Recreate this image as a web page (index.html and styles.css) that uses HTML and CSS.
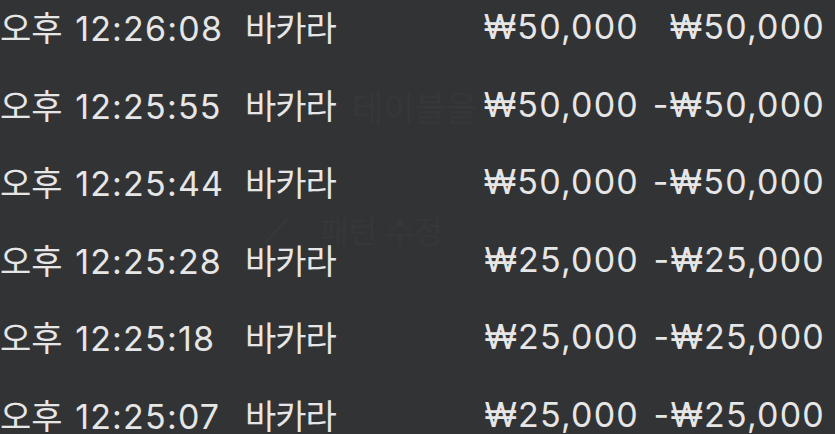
FILE: index.html
```html
<!DOCTYPE html>
<html lang="ko">
<head>
<meta charset="utf-8">
<link rel="stylesheet" href="styles.css">
</head>
<body>
<div class="screen">
  <div class="ghost">
    <div class="ghost-title">테이블을</div>
    <div class="ghost-btn">
      <svg class="ghost-icon" width="30" height="30" viewBox="0 0 30 30"><path d="M4 27 L26 3" stroke="currentColor" stroke-width="2.5" fill="none"/></svg>
      <span>패턴 수정</span>
    </div>
  </div>
  <div class="list">
    <div class="row"><span class="time"><span class="ampm">오후</span> <span class="num">12:26:08</span></span><span class="game">바카라</span><span class="bet num">₩50,000</span><span class="result num">₩50,000</span></div>
    <div class="row"><span class="time"><span class="ampm">오후</span> <span class="num">12:25:55</span></span><span class="game">바카라</span><span class="bet num">₩50,000</span><span class="result num">-₩50,000</span></div>
    <div class="row"><span class="time"><span class="ampm">오후</span> <span class="num">12:25:44</span></span><span class="game">바카라</span><span class="bet num">₩50,000</span><span class="result num">-₩50,000</span></div>
    <div class="row"><span class="time"><span class="ampm">오후</span> <span class="num">12:25:28</span></span><span class="game">바카라</span><span class="bet num">₩25,000</span><span class="result num">-₩25,000</span></div>
    <div class="row"><span class="time"><span class="ampm">오후</span> <span class="num">12:25:18</span></span><span class="game">바카라</span><span class="bet num">₩25,000</span><span class="result num">-₩25,000</span></div>
    <div class="row"><span class="time"><span class="ampm">오후</span> <span class="num">12:25:07</span></span><span class="game">바카라</span><span class="bet num">₩25,000</span><span class="result num">-₩25,000</span></div>
  </div>
</div>
</body>
</html>
```

FILE: styles.css
```css
html, body {
  margin: 0;
  padding: 0;
  background: #323335;
}
.screen {
  position: relative;
  width: 835px;
  height: 434px;
  overflow: hidden;
  background: #323335;
  font-family: Inter, "Noto Sans CJK KR", sans-serif;
  color: #e6e6e6;
}
.list {
  position: relative;
  margin-top: -12px;
}
.row {
  display: grid;
  grid-template-columns: 245px 140px 253px 186px;
  height: 77.6px;
  line-height: 77.6px;
  font-size: 34px;
  white-space: nowrap;
}
.num { letter-spacing: 1.2px; }
.ampm { font-family: "Noto Sans CJK KR", sans-serif; margin-right: 3px; }
.game { font-family: "Noto Sans CJK KR", sans-serif; letter-spacing: -1px; }
.bet, .result { text-align: right; margin-right: -1px; }
.ghost {
  position: absolute;
  inset: 0;
  color: #363739;
  font-family: "Noto Sans CJK KR", sans-serif;
}
.ghost-title {
  position: absolute;
  left: 352px;
  top: 82px;
  font-size: 34px;
}
.ghost-btn {
  position: absolute;
  left: 262px;
  top: 207px;
  display: flex;
  align-items: center;
  gap: 28px;
  font-size: 31px;
}
```
